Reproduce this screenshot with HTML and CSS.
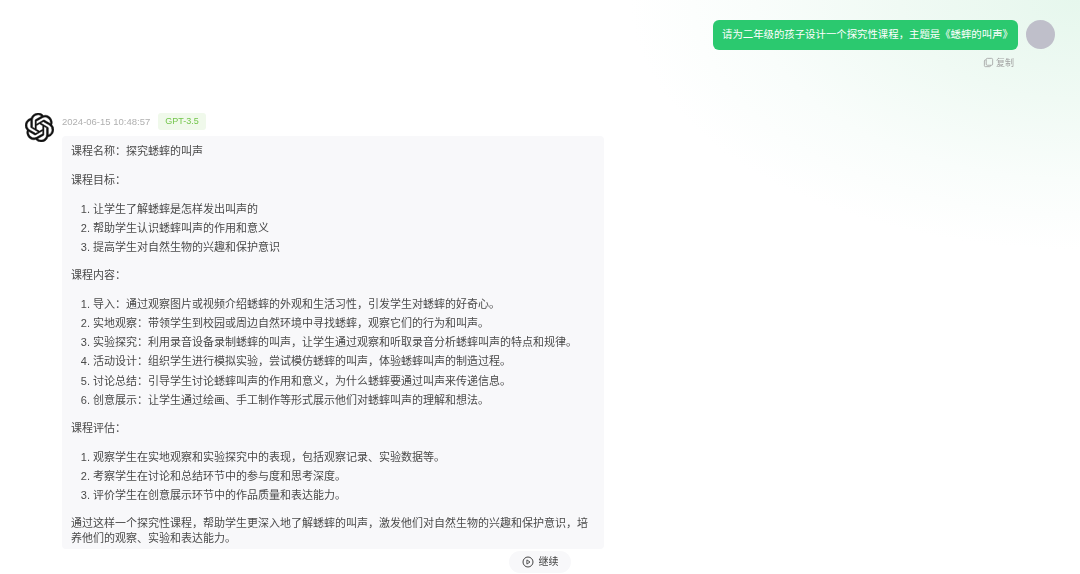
FILE: index.html
```html
<!DOCTYPE html>
<html lang="zh-CN">
<head>
<meta charset="utf-8">
<title>探究蟋蟀的叫声</title>
<link rel="stylesheet" href="styles.css">
</head>
<body>
<main class="chat">
  <section class="user-msg">
    <div class="user-col">
      <div class="user-bubble">请为二年级的孩子设计一个探究性课程，主题是《蟋蟀的叫声》</div>
      <div class="copy">
        <svg class="copy-icon" viewBox="0 0 12 12" fill="none" stroke="currentColor" stroke-width="0.9"><rect x="3.5" y="1.5" width="7" height="7.5" rx="1.2"/><path d="M3.5 3.2H2.6a1.1 1.1 0 0 0-1.1 1.1v5.1a1.1 1.1 0 0 0 1.1 1.1h4.6a1.1 1.1 0 0 0 1.1-1.1V9"/></svg>
        <span>复制</span>
      </div>
    </div>
    <div class="user-avatar"></div>
  </section>

  <section class="bot-msg">
    <svg class="bot-logo" viewBox="0 0 24 24"><path d="M22.2819 9.8211a5.9847 5.9847 0 0 0-.5157-4.9108 6.0462 6.0462 0 0 0-6.5098-2.9A6.0651 6.0651 0 0 0 4.9807 4.1818a5.9847 5.9847 0 0 0-3.9977 2.9 6.0462 6.0462 0 0 0 .7427 7.0966 5.98 5.98 0 0 0 .511 4.9107 6.051 6.051 0 0 0 6.5146 2.9001A5.9847 5.9847 0 0 0 13.2599 24a6.0557 6.0557 0 0 0 5.7718-4.2058 5.9894 5.9894 0 0 0 3.9977-2.9001 6.0557 6.0557 0 0 0-.7475-7.0729zm-9.022 12.6081a4.4755 4.4755 0 0 1-2.8764-1.0408l.1419-.0804 4.7783-2.7582a.7948.7948 0 0 0 .3927-.6813v-6.7369l2.02 1.1686a.071.071 0 0 1 .038.052v5.5826a4.504 4.504 0 0 1-4.4945 4.4944zm-9.6607-4.1254a4.4708 4.4708 0 0 1-.5346-3.0137l.142.0852 4.783 2.7582a.7712.7712 0 0 0 .7806 0l5.8428-3.3685v2.3324a.0804.0804 0 0 1-.0332.0615L9.74 19.9502a4.4992 4.4992 0 0 1-6.1408-1.6464zM2.3408 7.8956a4.485 4.485 0 0 1 2.3655-1.9728V11.6a.7664.7664 0 0 0 .3879.6765l5.8144 3.3543-2.0201 1.1685a.0757.0757 0 0 1-.071 0l-4.8303-2.7865A4.504 4.504 0 0 1 2.3408 7.872zm16.5963 3.8558L13.1038 8.364 15.1192 7.2a.0757.0757 0 0 1 .071 0l4.8303 2.7913a4.4944 4.4944 0 0 1-.6765 8.1042v-5.6772a.79.79 0 0 0-.407-.667zm2.0107-3.0231l-.142-.0852-4.7735-2.7818a.7759.7759 0 0 0-.7854 0L9.409 9.2297V6.8974a.0662.0662 0 0 1 .0284-.0615l4.8303-2.7866a4.4992 4.4992 0 0 1 6.6802 4.66zM8.3065 12.863l-2.02-1.1638a.0804.0804 0 0 1-.038-.0567V6.0742a4.4992 4.4992 0 0 1 7.3757-3.4537l-.142.0805L8.704 5.459a.7948.7948 0 0 0-.3927.6813zm1.0976-2.3654l2.602-1.4998 2.6069 1.4998v2.9994l-2.5974 1.4997-2.6067-1.4997Z"/></svg>
    <div class="bot-col">
      <div class="meta">
        <time class="stamp">2024-06-15 10:48:57</time>
        <span class="model-tag">GPT-3.5</span>
      </div>
      <article class="answer">
        <p>课程名称：探究蟋蟀的叫声</p>
        <p>课程目标：</p>
        <ol>
          <li>让学生了解蟋蟀是怎样发出叫声的</li>
          <li>帮助学生认识蟋蟀叫声的作用和意义</li>
          <li>提高学生对自然生物的兴趣和保护意识</li>
        </ol>
        <p>课程内容：</p>
        <ol>
          <li>导入：通过观察图片或视频介绍蟋蟀的外观和生活习性，引发学生对蟋蟀的好奇心。</li>
          <li>实地观察：带领学生到校园或周边自然环境中寻找蟋蟀，观察它们的行为和叫声。</li>
          <li>实验探究：利用录音设备录制蟋蟀的叫声，让学生通过观察和听取录音分析蟋蟀叫声的特点和规律。</li>
          <li>活动设计：组织学生进行模拟实验，尝试模仿蟋蟀的叫声，体验蟋蟀叫声的制造过程。</li>
          <li>讨论总结：引导学生讨论蟋蟀叫声的作用和意义，为什么蟋蟀要通过叫声来传递信息。</li>
          <li>创意展示：让学生通过绘画、手工制作等形式展示他们对蟋蟀叫声的理解和想法。</li>
        </ol>
        <p>课程评估：</p>
        <ol>
          <li>观察学生在实地观察和实验探究中的表现，包括观察记录、实验数据等。</li>
          <li>考察学生在讨论和总结环节中的参与度和思考深度。</li>
          <li>评价学生在创意展示环节中的作品质量和表达能力。</li>
        </ol>
        <p>通过这样一个探究性课程，帮助学生更深入地了解蟋蟀的叫声，激发他们对自然生物的兴趣和保护意识，培养他们的观察、实验和表达能力。</p>
      </article>
      <div class="continue-row">
        <button class="continue" type="button">
          <svg class="play" viewBox="0 0 12 12" fill="none" stroke="currentColor"><circle cx="6" cy="6" r="5" stroke-width="1"/><path d="M4.9 3.9 8 6 4.9 8.1Z" stroke-width="0.9" stroke-linejoin="round"/></svg>
          <span class="continue-label">继续</span>
        </button>
      </div>
    </div>
  </section>
</main>
</body>
</html>
```
FILE: styles.css
```css
* { box-sizing: border-box; }
html, body { height: 100%; }
body {
  margin: 0;
  overflow: hidden;
  background:
    radial-gradient(ellipse 450px 250px at 100% 0%, #e6f7ed 0%, #f0faf4 40%, #f9fdfb 72%, rgba(255,255,255,0) 100%),
    #fff;
  font-family: "Liberation Sans", "Noto Sans CJK SC", sans-serif;
  color: #4a4a4a;
}
.chat {
  height: 574px;
  padding: 20px 25px 0 25px;
  display: flex;
  flex-direction: column;
  filter: blur(0.3px);
}
.user-msg {
  display: flex;
  justify-content: flex-end;
  gap: 8px;
}
.user-col {
  display: flex;
  flex-direction: column;
  align-items: flex-end;
}
.user-bubble {
  height: 30px;
  width: 305px;
  padding: 0 9px;
  background: #2bc96f;
  border-radius: 6px;
  color: #fff;
  font-size: 10.4px;
  line-height: 30px;
  white-space: nowrap;
}
.user-avatar {
  width: 29px;
  height: 29px;
  border-radius: 50%;
  background: #bfbfca;
}
.copy {
  margin-top: 7px;
  padding-right: 4px;
  display: flex;
  align-items: center;
  gap: 2px;
  height: 11px;
  font-size: 9px;
  color: #a3a3a3;
}
.copy-icon { width: 11px; height: 11px; }
.bot-msg {
  margin-top: 45px;
  display: flex;
  gap: 8px;
}
.bot-logo {
  width: 29px;
  height: 29px;
  flex: none;
  fill: #111;
  stroke: #111;
  stroke-width: 0.35;
}
.bot-col {
  width: 542px;
  display: flex;
  flex-direction: column;
}
.meta {
  height: 17px;
  display: flex;
  align-items: center;
  gap: 8px;
  font-size: 9.5px;
}
.stamp { color: #b0b0b0; width: 88px; white-space: nowrap; }
.model-tag {
  width: 48px;
  height: 17px;
  line-height: 17px;
  text-align: center;
  border-radius: 3px;
  background: #f0f9eb;
  color: #72c54a;
  font-size: 9px;
}
.answer {
  margin-top: 6px;
  height: 413px;
  padding: 7.7px 9px 0;
  background: #f8f8fa;
  border-radius: 4px;
  font-size: 11px;
  line-height: 15px;
}
.answer p { margin: 0 0 14px; }
.answer ol {
  margin: 0 0 13.3px;
  padding: 0 0 0 22px;
}
.answer li { margin-bottom: 4.1px; }
.answer p:last-child { margin-bottom: 0; }
.continue-row {
  margin-top: 2px;
  display: flex;
  justify-content: flex-end;
  padding-right: 33px;
}
.continue {
  width: 62px;
  height: 22px;
  border: 0;
  border-radius: 11px;
  background: #f8f8fa;
  padding: 0;
  display: flex;
  align-items: center;
  justify-content: center;
  gap: 5px;
  font: inherit;
  font-size: 10px;
  color: #444;
}
.continue-label { line-height: 12px; margin-top: -1px; }
.play { width: 12px; height: 12px; }
```
